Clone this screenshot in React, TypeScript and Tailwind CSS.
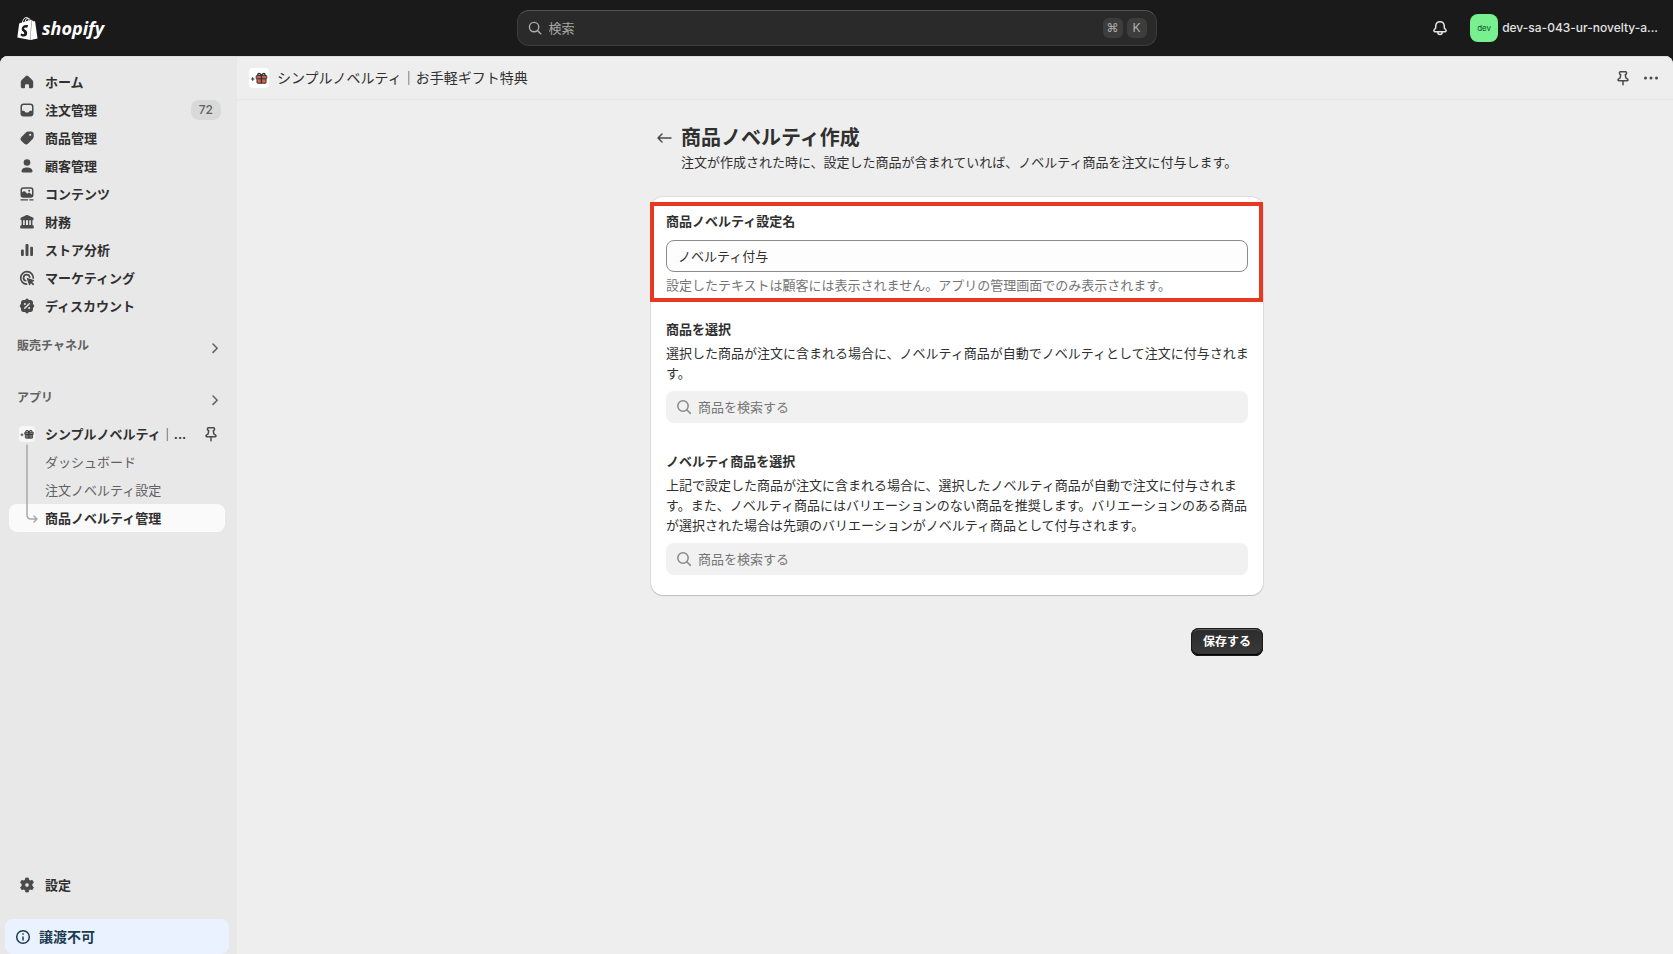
import React, { useState } from "react";
import { SiShopify } from "react-icons/si";

interface IconProps {
  className?: string;
}

function HomeIcon() {
  return (
    <svg viewBox="0 0 20 20" className="w-5 h-5 shrink-0" fill="currentColor">
      <path d="M8.900 3.900a1.600 1.600 0 0 1 2.200 0l4.200 4.100c.6.600.9 1.300.9 2.100v4.400c0 1-.8 1.800-1.800 1.800h-1.400c-.6 0-1-.4-1-1v-1.800c0-.8-.5-1.300-1.200-1.300h-1.600c-.7 0-1.200.5-1.200 1.300v1.800c0 .6-.4 1-1 1h-1.400c-1 0-1.800-.8-1.800-1.800v-4.400c0-.8.3-1.500.9-2.100z" />
    </svg>
  );
}

function OrderIcon() {
  return (
    <svg viewBox="0 0 20 20" className="w-5 h-5 shrink-0" fill="currentColor">
      <path
        fillRule="evenodd"
        d="M6.700 3.400h6.600a3.200 3.200 0 0 1 3.200 3.200v6.700a3.200 3.200 0 0 1-3.200 3.200h-6.600a3.200 3.200 0 0 1-3.200-3.200v-6.700a3.200 3.200 0 0 1 3.200-3.200zm-.1 1.500a1.700 1.700 0 0 0-1.600 1.700v4.100h1.700c.5 0 .9.3 1.100.7l.2.4c.2.500.600.700 1.100.7h1.800c.5 0 .9-.2 1.100-.7l.2-.4c.2-.4.600-.7 1.100-.7h1.700v-4.100a1.700 1.700 0 0 0-1.600-1.700z"
      />
    </svg>
  );
}

function ProductIcon() {
  return (
    <svg viewBox="0 0 20 20" className="w-5 h-5 shrink-0" fill="currentColor">
      <path
        fillRule="evenodd"
        d="M11.300 3.600h3.100c1.300 0 2.300 1 2.300 2.300v2.700c0 .9-.4 1.800-1 2.400l-4.500 4.600a2.900 2.900 0 0 1-4.100 0l-2.600-2.600a2.900 2.900 0 0 1 0-4.100l4.400-4.400c.6-.6 1.500-.9 2.400-.9zm1.900 4.300a1.100 1.100 0 1 0 0-2.200 1.100 1.100 0 0 0 0 2.200z"
      />
    </svg>
  );
}

function CustomerIcon() {
  return (
    <svg viewBox="0 0 20 20" className="w-5 h-5 shrink-0" fill="currentColor">
      <circle cx="10" cy="6.500" r="3.300" />
      <path d="M4.500 15.300c0-2.300 2.300-3.800 5.500-3.800s5.500 1.500 5.500 3.800c0 .700-.5 1.200-1.200 1.200h-8.600c-.7 0-1.200-.5-1.200-1.200z" />
    </svg>
  );
}

function ContentIcon() {
  return (
    <svg viewBox="0 0 20 20" className="w-5 h-5 shrink-0" fill="currentColor">
      <path
        fillRule="evenodd"
        d="M6.200 3.300h7.600a2.700 2.700 0 0 1 2.700 2.700v5a2.700 2.700 0 0 1-2.700 2.700h-7.600a2.700 2.700 0 0 1-2.700-2.700v-5a2.700 2.700 0 0 1 2.700-2.700zm.2 1.400c-.8 0-1.400.6-1.400 1.400v2.500l1.200-1c.6-.5 1.300-.500 1.800 0l2.200 2.100.9-.7c.5-.4 1.200-.4 1.700 0l2.200 1.800v-4.700c0-.8-.6-1.400-1.400-1.400zm5.800 3a1 1 0 1 0 0-2 1 1 0 0 0 0 2z"
      />
      <path d="M3.500 15.200h7.500v1.400h-7.500zM12.300 15.200h4.200v1.400h-4.200z" />
    </svg>
  );
}

function FinanceIcon() {
  return (
    <svg viewBox="0 0 20 20" className="w-5 h-5 shrink-0" fill="currentColor">
      <path d="M9.100 3.300c.6-.3 1.200-.3 1.800 0l4.900 2.300c.5.2.8.7.8 1.300 0 .8-.6 1.400-1.400 1.400h-10.400c-.8 0-1.400-.6-1.400-1.400 0-.6.300-1.100.8-1.300z" />
      <path d="M4.600 8h1.500v5.500h-1.500zM7.700 8h1.300v5.500h-1.300zM11 8h1.300v5.500h-1.300zM13.900 8h1.500v5.500h-1.500z" />
      <path d="M4.700 13h10.600c.9 0 1.500.9 1.500 1.700v1.100c0 .4-.3.7-.7.7h-12.200c-.4 0-.7-.3-.7-.7v-1.100c0-.8.6-1.700 1.500-1.700z" />
    </svg>
  );
}

function AnalyticsIcon() {
  return (
    <svg viewBox="0 0 20 20" className="w-5 h-5 shrink-0" fill="currentColor">
      <rect x="4" y="9.500" width="2.800" height="6.500" rx="1" />
      <rect x="8.500" y="4" width="3" height="12" rx="1" />
      <rect x="13.200" y="6.800" width="2.800" height="9.200" rx="1" />
    </svg>
  );
}

function MarketingIcon() {
  return (
    <svg viewBox="0 0 20 20" className="w-5 h-5 shrink-0" fill="none" stroke="currentColor" strokeWidth="1.700" strokeLinecap="round">
      <path d="M9.600 16.200a6.300 6.300 0 1 1 6.700-6.200" />
      <path d="M8.700 12.700a3.100 3.100 0 1 1 4-3.500" />
      <path
        d="M10.300 9.900l6.500 2.200c.5.200.5.800.1 1l-1.700.9 1.700 1.700c.3.300.3.600 0 .9l-.4.4c-.3.300-.6.300-.9 0l-1.700-1.700-.9 1.700c-.2.500-.9.400-1-.1l-2.200-6.300c-.1-.5.100-.8.500-.7z"
        fill="currentColor"
        stroke="none"
      />
    </svg>
  );
}

function DiscountIcon() {
  return (
    <svg viewBox="0 0 20 20" className="w-5 h-5 shrink-0">
      <path
        fill="currentColor"
        d="M8.700 3.300a1.800 1.800 0 0 1 2.600 0l.6.700h1.700c1.300 0 2.400 1.100 2.400 2.400v1.700l.7.600a1.800 1.800 0 0 1 0 2.600l-.7.600v1.700c0 1.300-1.100 2.400-2.400 2.400h-1.700l-.6.700a1.800 1.800 0 0 1-2.600 0l-.6-.7h-1.700c-1.300 0-2.400-1.100-2.400-2.400v-1.700l-.7-.6a1.800 1.800 0 0 1 0-2.600l.7-.6v-1.700c0-1.300 1.100-2.400 2.400-2.400h1.700z"
      />
      <path d="M7.700 12.300l4.600-4.600" stroke="#e8e8e8" strokeWidth="1.400" strokeLinecap="round" />
      <circle cx="7.900" cy="8" r="1" fill="#e8e8e8" />
      <circle cx="12.100" cy="12" r="1" fill="#e8e8e8" />
    </svg>
  );
}

function SettingsIcon() {
  return (
    <svg viewBox="0 0 20 20" className="w-5 h-5 shrink-0" fill="currentColor">
      <path
        fillRule="evenodd"
        d="M8.700 3h2.600l.5 2.100 1.300.8 2.100-.6 1.300 2.300-1.500 1.500v1.700l1.500 1.600-1.300 2.300-2.100-.6-1.300.8-.5 2.100h-2.600l-.5-2.100-1.300-.8-2.100.6-1.300-2.300 1.500-1.600v-1.700l-1.500-1.500 1.300-2.300 2.100.6 1.300-.8zm1.300 9.200a2.200 2.200 0 1 0 0-4.400 2.200 2.200 0 0 0 0 4.400z"
        stroke="currentColor"
        strokeWidth=".8"
        strokeLinejoin="round"
      />
    </svg>
  );
}

function PinIcon({ className }: IconProps) {
  return (
    <svg viewBox="0 0 20 20" className={className} fill="none" stroke="currentColor" strokeWidth="1.500" strokeLinejoin="round" strokeLinecap="round">
      <path d="M7.300 3.800h5.400c.5 0 .8.400.8.800v.8c0 .5-.3.900-.8 1.100l-.4.200.5 3.200 1.500.9c.5.300.7.800.7 1.300 0 .4-.3.700-.7.700h-8.600c-.4 0-.7-.3-.7-.7 0-.5.2-1 .7-1.300l1.500-.9.5-3.200-.4-.2c-.5-.2-.8-.6-.8-1.100v-.8c0-.4.3-.8.8-.8z" />
      <path d="M10 13v3.700" />
    </svg>
  );
}

function SearchIcon({ className }: IconProps) {
  return (
    <svg viewBox="0 0 20 20" className={className} fill="none" stroke="currentColor" strokeWidth="1.500" strokeLinecap="round">
      <circle cx="9" cy="9" r="5.200" />
      <path d="M13 13l3.400 3.400" />
    </svg>
  );
}

function BellIcon() {
  return (
    <svg viewBox="0 0 20 20" className="w-5 h-5" fill="none" stroke="currentColor" strokeWidth="1.500" strokeLinejoin="round">
      <path d="M10 3.700c2.300 0 4 1.700 4.200 3.900l.1 1.800c0 .5.300 1 .6 1.400l.9 1c.6.700.2 1.900-.8 1.900h-10c-1 0-1.400-1.200-.8-1.900l.9-1c.4-.4.6-.9.600-1.400l.1-1.800c.2-2.200 1.900-3.900 4.200-3.900z" />
      <path d="M7.800 13.900c0 1.500.9 2.500 2.200 2.500s2.200-1 2.200-2.500" />
    </svg>
  );
}

function ChevronIcon() {
  return (
    <svg viewBox="0 0 20 20" className="w-5 h-5" fill="none" stroke="currentColor" strokeWidth="1.500" strokeLinecap="round" strokeLinejoin="round">
      <path d="M8 6l4.200 4.200-4.200 4.200" />
    </svg>
  );
}

// App icon: a small star followed by a gift box
function GiftIcon({ className, box }: IconProps & { box: string }) {
  return (
    <svg viewBox="0 0 20 20" className={className}>
      <path d="M3.700 9.200v3.600M1.900 11h3.600" stroke="#444" strokeWidth="1.200" />
      <path d="M12.400 7.600c-1-2.700-4.200-2.600-3.500-.4M12.400 7.600c1-2.700 4.200-2.600 3.500-.4" fill="none" stroke="#333" strokeWidth="1.400" />
      <rect x="7.200" y="7.600" width="10.600" height="3.200" rx=".5" fill={box} stroke="#333" strokeWidth="1" />
      <rect x="8" y="10.800" width="9" height="4.400" rx=".5" fill={box} stroke="#333" strokeWidth="1" />
      <path d="M12.400 7.600v7.600" stroke="#333" strokeWidth="1.400" />
    </svg>
  );
}

const NAV_ITEMS = [
  { label: "ホーム", icon: HomeIcon },
  { label: "注文管理", icon: OrderIcon, badge: "72" },
  { label: "商品管理", icon: ProductIcon },
  { label: "顧客管理", icon: CustomerIcon },
  { label: "コンテンツ", icon: ContentIcon },
  { label: "財務", icon: FinanceIcon },
  { label: "ストア分析", icon: AnalyticsIcon },
  { label: "マーケティング", icon: MarketingIcon },
  { label: "ディスカウント", icon: DiscountIcon },
];

function TopBar() {
  return (
    <header className="h-14 shrink-0 grid grid-cols-[1fr_minmax(0,640px)_1fr] items-center bg-[#1a1a1a]">
      <a href="#" className="flex items-center gap-[3px] pl-4 text-white">
        <SiShopify size={23} />
        <span className="font-['Open_Sans'] text-lg leading-6 font-bold italic">shopify</span>
      </a>

      <label className="h-9 flex items-center rounded-xl border border-[#3c3c3c] border-t-[#555] bg-[#2a2a2a] pl-2 pr-[9px] text-[#b0b0b0]">
        <SearchIcon className="w-[18px] h-[18px] shrink-0" />
        <input
          type="text"
          aria-label="検索"
          placeholder="検索"
          className="min-w-0 flex-1 bg-transparent pl-[5px] text-[13px] leading-5 outline-none placeholder:text-[#a8a8a8]"
        />
        <span className="flex gap-1">
          <kbd className="w-5 h-5 flex items-center justify-center rounded-md bg-[#3d3d3d] text-xs font-['DejaVu_Sans']">⌘</kbd>
          <kbd className="w-5 h-5 flex items-center justify-center rounded-md bg-[#3d3d3d] text-xs font-['Inter']">K</kbd>
        </span>
      </label>

      <div className="flex items-center justify-end pr-[15px]">
        <button aria-label="通知" className="mr-5 text-[#e3e3e3]">
          <BellIcon />
        </button>
        <button className="flex items-center gap-1">
          <span className="w-7 h-7 flex items-center justify-center rounded-lg bg-[#79f08f] text-[8px] text-[#0c5132]">dev</span>
          <span className="text-xs leading-5 font-medium text-[#e3e3e3]">dev-sa-043-ur-novelty-a...</span>
        </button>
      </div>
    </header>
  );
}

function Sidebar() {
  return (
    <aside className="w-[237px] shrink-0 flex flex-col border-t border-[#dcdcdc] bg-[#e8e8e8] pt-[11px] text-[13px] leading-5 text-[#303030]">
      <nav className="flex-1 pl-[9px] pr-3">
        <ul>
          {NAV_ITEMS.map((item) => (
            <li key={item.label}>
              <a href="#" className="h-7 flex items-center gap-2 pl-2 pr-1 font-semibold">
                <span className="text-[#4a4a4a]">
                  <item.icon />
                </span>
                <span className="flex-1">{item.label}</span>
                {item.badge && (
                  <span className="h-5 px-2 rounded-lg bg-[#d9d9d9] text-xs leading-5 font-medium text-[#616161]">{item.badge}</span>
                )}
              </a>
            </li>
          ))}
        </ul>

        <button className="mt-3 w-full h-8 flex items-center justify-between pl-2 text-xs font-semibold text-[#616161]">
          <span className="pb-1">販売チャネル</span>
          <ChevronIcon />
        </button>
        <button className="mt-5 w-full h-8 flex items-center justify-between pl-2 text-xs font-semibold text-[#616161]">
          <span className="pb-1">アプリ</span>
          <ChevronIcon />
        </button>

        <div className="relative mt-1">
          <div className="h-7 flex items-center pl-[10px] pr-1">
            <span className="w-4 h-4 rounded bg-[#f7f7f7]">
              <GiftIcon className="w-4 h-4" box="#777" />
            </span>
            <a href="#" className="ml-[10px] flex-1 font-semibold">
              シンプルノベルティ｜...
            </a>
            <button aria-label="ピン留め" className="text-[#4a4a4a]">
              <PinIcon className="w-5 h-5" />
            </button>
          </div>
          <a href="#" className="h-7 flex items-center pl-9 text-[#616161]">
            ダッシュボード
          </a>
          <a href="#" className="h-7 flex items-center pl-9 text-[#616161]">
            注文ノベルティ設定
          </a>
          <a href="#" className="h-7 flex items-center rounded-lg bg-[#fafafa] pl-9 font-semibold">
            商品ノベルティ管理
          </a>
          <svg
            viewBox="0 0 14 82"
            className="absolute left-4 top-6 w-[14px] h-[82px]"
            fill="none"
            stroke="#a8a8a8"
            strokeWidth="1.500"
            strokeLinecap="round"
            strokeLinejoin="round"
          >
            <path d="M2 1v70q0 4 4 4h6M9 72l3 3-3 3" />
          </svg>
        </div>
      </nav>

      <a href="#" className="h-7 ml-[9px] mb-5 flex items-center gap-2 pl-2 font-semibold">
        <span className="text-[#4a4a4a]">
          <SettingsIcon />
        </span>
        設定
      </a>
      <div className="h-[35px] ml-[5px] mr-2 flex items-center gap-1.5 rounded-lg bg-[#eaf2ff] pl-2 text-sm font-semibold text-[#1a3b50]">
        <svg viewBox="0 0 20 20" className="w-5 h-5" fill="none" stroke="currentColor" strokeWidth="1.500">
          <circle cx="10" cy="10" r="6.300" />
          <path d="M10 9.500v4M10 6.300v1.500" />
        </svg>
        譲渡不可
      </div>
    </aside>
  );
}

function ProductSearch({ id }: { id: string }) {
  return (
    <div className="mt-2 h-8 flex items-center gap-1 rounded-lg bg-[#f1f1f1] px-2 text-[#8a8a8a]">
      <SearchIcon className="w-5 h-5 shrink-0" />
      <input
        id={id}
        type="text"
        placeholder="商品を検索する"
        className="min-w-0 flex-1 bg-transparent text-[13px] leading-5 outline-none placeholder:text-[#757575]"
      />
    </div>
  );
}

export default function App() {
  const [name, setName] = useState("ノベルティ付与");

  return (
    <div className="min-h-screen flex flex-col bg-[#1a1a1a] font-['Inter','Noto_Sans_CJK_JP',sans-serif] text-[#303030]">
      <TopBar />

      <div className="flex-1 flex overflow-hidden rounded-t-lg bg-[#eee]">
        <Sidebar />

        <main className="flex-1 min-w-0 border-t border-[#dcdcdc] bg-[#eee]">
          <div className="h-[43px] flex items-center border-b border-[#e6e6e6] px-3">
            <span className="w-5 h-5 rounded bg-white">
              <GiftIcon className="w-5 h-5" box="#d9634f" />
            </span>
            <span className="ml-2 flex-1 text-sm">シンプルノベルティ｜お手軽ギフト特典</span>
            <button aria-label="ピン留め" className="mr-2 text-[#4a4a4a]">
              <PinIcon className="w-5 h-5" />
            </button>
            <button aria-label="その他" className="text-[#4a4a4a]">
              <svg viewBox="0 0 20 20" className="w-5 h-5" fill="currentColor">
                <circle cx="4.500" cy="10" r="1.500" />
                <circle cx="10" cy="10" r="1.500" />
                <circle cx="15.500" cy="10" r="1.500" />
              </svg>
            </button>
          </div>

          <div className="pl-1">
            <div className="mx-auto max-w-[612px] pt-[26px] pb-8 text-[13px] leading-5">
              <div className="flex items-start gap-0.5">
                <button aria-label="戻る" className="w-7 h-6 flex items-center justify-center text-[#4a4a4a]">
                  <svg viewBox="0 0 20 20" className="w-5 h-5" fill="none" stroke="currentColor" strokeWidth="1.500" strokeLinecap="round" strokeLinejoin="round">
                    <path d="M16 10h-13M7 6l-4 4 4 4" />
                  </svg>
                </button>
                <div>
                  <h1 className="text-xl leading-6 font-bold">商品ノベルティ作成</h1>
                  <p className="mt-0.5 whitespace-nowrap">注文が作成された時に、設定した商品が含まれていれば、ノベルティ商品を注文に付与します。</p>
                </div>
              </div>

              <form id="novelty-form" className="mt-[25px] rounded-xl bg-white px-[15px] pb-5 shadow-[0_0_0_1px_rgba(0,0,0,0.07),0_1px_1px_rgba(0,0,0,0.15)]">
                <div className="relative -mx-[15px] px-[15px] pt-3.5">
                  <label htmlFor="novelty-name" className="block font-semibold">
                    商品ノベルティ設定名
                  </label>
                  <input
                    id="novelty-name"
                    type="text"
                    value={name}
                    onChange={(e) => setName(e.target.value)}
                    className="mt-[9px] block w-full h-8 rounded-lg border border-[#8a8a8a] bg-[#fdfdfd] px-[11px] pb-0.5 outline-none"
                  />
                  <p className="mt-[3px] text-[#757575]">設定したテキストは顧客には表示されません。アプリの管理画面でのみ表示されます。</p>
                  <div className="absolute -left-px right-0 top-[5px] -bottom-[7px] border-4 border-[#e93820] pointer-events-none" />
                </div>

                <label htmlFor="product-search" className="mt-6 block font-semibold">
                  商品を選択
                </label>
                <p className="mt-1 -mr-1">選択した商品が注文に含まれる場合に、ノベルティ商品が自動でノベルティとして注文に付与されます。</p>
                <ProductSearch id="product-search" />

                <label htmlFor="novelty-search" className="mt-7 block font-semibold">
                  ノベルティ商品を選択
                </label>
                <p className="mt-1 -mr-1">
                  上記で設定した商品が注文に含まれる場合に、選択したノベルティ商品が自動で注文に付与されます。また、ノベルティ商品にはバリエーションのない商品を推奨します。バリエーションのある商品が選択された場合は先頭のバリエーションがノベルティ商品として付与されます。
                </p>
                <ProductSearch id="novelty-search" />
              </form>

              <div className="mt-[33px] flex justify-end">
                <button
                  type="submit"
                  form="novelty-form"
                  className="h-7 px-3 rounded-lg bg-linear-to-b from-[#2b2b2b] to-[#3a3a3a] text-xs font-semibold text-white shadow-[inset_0_0_0_1px_#1a1a1a,inset_0_2px_0_#5c5c5c,inset_0_-2px_0_#000]"
                >
                  保存する
                </button>
              </div>
            </div>
          </div>
        </main>
      </div>
    </div>
  );
}
